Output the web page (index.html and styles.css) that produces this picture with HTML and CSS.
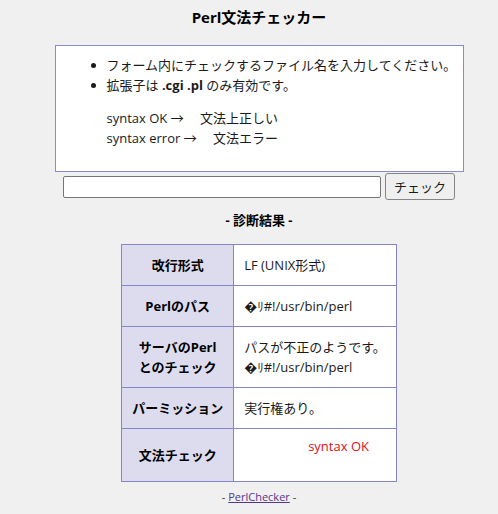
FILE: index.html
```html
<!DOCTYPE html>
<html lang="ja">
<head>
<meta charset="utf-8">
<title>Perl文法チェッカー</title>
<link rel="stylesheet" href="styles.css">
</head>
<body>
<div class="page">
  <h1 class="title">Perl文法チェッカー</h1>
  <div class="info">
    <ul class="notes">
      <li>フォーム内にチェックするファイル名を入力してください。</li>
      <li>拡張子は <b>.cgi .pl</b> のみ有効です。</li>
    </ul>
    <div class="legend">
      <div>syntax OK → 　文法上正しい</div>
      <div>syntax error → 　文法エラー</div>
    </div>
  </div>
  <form class="check-form">
    <input class="file-input" type="text">
    <button class="check-btn" type="button">チェック</button>
  </form>
  <h2 class="result-title">- 診断結果 -</h2>
  <table class="result">
    <tr><th>改行形式</th><td>LF (UNIX形式)</td></tr>
    <tr><th>Perlのパス</th><td>&#xFFFD;&#xFF98;#!/usr/bin/perl</td></tr>
    <tr><th>サーバのPerl<br>とのチェック</th><td>パスが不正のようです。<br>&#xFFFD;&#xFF98;#!/usr/bin/perl</td></tr>
    <tr><th>パーミッション</th><td>実行権あり。</td></tr>
    <tr><th>文法チェック</th><td class="syntax-cell"><span class="syntax-ok">syntax OK</span></td></tr>
  </table>
  <p class="footer">- <a class="footer-link" href="#">PerlChecker</a> -</p>
</div>
</body>
</html>
```
FILE: styles.css
```css
html, body {
  margin: 0;
  padding: 0;
  background: #f0f0f0;
}
body {
  font-family: "Open Sans", "Noto Sans CJK JP", sans-serif;
  font-size: 13px;
  line-height: 20px;
  color: #1a1a1a;
}
.page {
  padding: 7px 8px 0 28px;
}
.title {
  margin: 0;
  font-size: 15px;
  line-height: 20px;
  font-weight: bold;
  text-align: center;
  color: #000;
}
.info {
  box-sizing: border-box;
  width: 409px;
  margin: 18px auto 0;
  background: #fff;
  border: 1px solid #8a8ad0;
  padding: 9px 0 23px 11px;
}
.notes {
  margin: 0;
  padding-left: 40px;
}
.notes li {
  white-space: nowrap;
}
.notes b {
  font-weight: bold;
}
.legend {
  margin: 13px 0 0 40px;
}
.check-form {
  display: flex;
  justify-content: center;
  align-items: center;
  gap: 4px;
  margin: 1px 0 0;
}
.file-input {
  box-sizing: border-box;
  width: 318px;
  height: 22px;
  margin: 0;
  border: 1px solid #767676;
  border-radius: 2px;
  background: #fff;
  padding: 1px 2px;
}
.check-btn {
  box-sizing: border-box;
  width: 70px;
  height: 27px;
  margin: 0;
  padding: 0;
  border: 1px solid #858585;
  border-radius: 3px;
  background: #efefef;
  font-family: "Open Sans", "Noto Sans CJK JP", sans-serif;
  font-size: 13px;
  color: #1a1a1a;
}
.result-title {
  margin: 10px 0 0;
  font-size: 13px;
  line-height: 20px;
  font-weight: bold;
  text-align: center;
  color: #000;
}
.result {
  width: 275px;
  margin: 14px auto 0;
  border-collapse: collapse;
  background: #fff;
}
.result th,
.result td {
  border: 1px solid #8585cc;
  padding: 10px;
  line-height: 20px;
  white-space: nowrap;
}
.result th {
  width: 91px;
  background: #dcdcee;
  font-weight: bold;
  text-align: center;
  color: #000;
}
.result td {
  text-align: left;
  padding-left: 10px;
}
.result .syntax-cell {
  vertical-align: top;
  padding-top: 7px;
}
.syntax-ok {
  display: block;
  padding: 0 0 15px 64px;
  color: #dd1122;
}
.footer {
  margin: 7px 0 0;
  font-size: 11px;
  line-height: 16px;
  text-align: center;
  color: #333;
}
.footer-link {
  color: #56358c;
}
```
